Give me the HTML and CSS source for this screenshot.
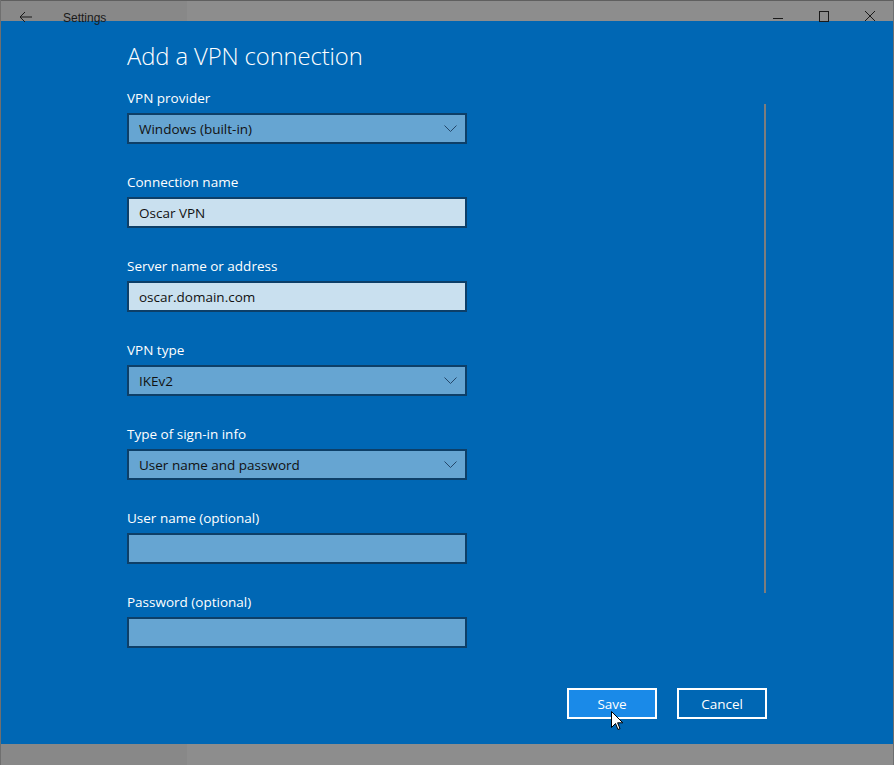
FILE: index.html
```html
<!DOCTYPE html>
<html>
<head>
<meta charset="utf-8">
<link rel="stylesheet" href="styles.css">
</head>
<body>
<div class="window">
  <div class="titlebar">
    <div class="tb-left">
      <svg class="back" width="14" height="12" viewBox="0 0 14 12"><path d="M6 1 L1 6 L6 11 M1 6 H13" fill="none" stroke="#1a1a1a" stroke-width="1"/></svg>
      <span class="tb-title">Settings</span>
    </div>
    <div class="tb-controls">
      <svg width="12" height="12" viewBox="0 0 12 12"><path d="M1 8.5 H11" stroke="#1a1a1a" stroke-width="1"/></svg>
      <svg width="12" height="12" viewBox="0 0 12 12"><rect x="1.5" y="1.5" width="9" height="10" fill="none" stroke="#1a1a1a" stroke-width="1"/></svg>
      <svg width="12" height="12" viewBox="0 0 12 12"><path d="M1 1 L11 11 M11 1 L1 11" stroke="#1a1a1a" stroke-width="1"/></svg>
    </div>
  </div>
  <div class="content">
    <div class="main">
      <div class="form">
        <h1 class="title">Add a VPN connection</h1>
        <div class="group">
          <div class="label">VPN provider</div>
          <div class="field select"><span>Windows (built-in)</span><svg class="chev" width="13" height="8" viewBox="0 0 13 8"><path d="M0.5 0.5 L6.5 6.5 L12.5 0.5" fill="none" stroke="#24476a" stroke-width="1"/></svg></div>
        </div>
        <div class="group">
          <div class="label">Connection name</div>
          <div class="field filled"><span>Oscar VPN</span></div>
        </div>
        <div class="group">
          <div class="label">Server name or address</div>
          <div class="field filled"><span>oscar.domain.com</span></div>
        </div>
        <div class="group">
          <div class="label">VPN type</div>
          <div class="field select"><span>IKEv2</span><svg class="chev" width="13" height="8" viewBox="0 0 13 8"><path d="M0.5 0.5 L6.5 6.5 L12.5 0.5" fill="none" stroke="#24476a" stroke-width="1"/></svg></div>
        </div>
        <div class="group">
          <div class="label">Type of sign-in info</div>
          <div class="field select"><span>User name and password</span><svg class="chev" width="13" height="8" viewBox="0 0 13 8"><path d="M0.5 0.5 L6.5 6.5 L12.5 0.5" fill="none" stroke="#24476a" stroke-width="1"/></svg></div>
        </div>
        <div class="group">
          <div class="label">User name (optional)</div>
          <div class="field empty"></div>
        </div>
        <div class="group last">
          <div class="label">Password (optional)</div>
          <div class="field empty"></div>
        </div>
      </div>
      <div class="scrollbar"></div>
    </div>
    <div class="actions">
      <div class="btn primary">Save</div>
      <div class="btn">Cancel</div>
    </div>
    <svg class="cursor" width="13" height="21" viewBox="0 0 13 21"><path d="M0.5 0.5 L0.5 16.5 L4.5 12.5 L7 18.5 L9 17.6 L6.6 11.8 L11.8 11.8 Z" fill="#fff" stroke="#000" stroke-width="1" stroke-linejoin="miter"/></svg>
  </div>
  <div class="bottombar"><div class="bb-left"></div></div>
</div>
</body>
</html>
```
FILE: styles.css
```css
html, body {
  margin: 0;
  padding: 0;
}
body {
  width: 894px;
  height: 765px;
  overflow: hidden;
  background: #8c8c8c;
  font-family: "Open Sans", "Noto Sans", sans-serif;
}
.window {
  width: 894px;
  height: 765px;
  box-sizing: border-box;
  border-left: 1px solid #6f6f6f;
  border-right: 1px solid #6f6f6f;
  display: flex;
  flex-direction: column;
}
.titlebar {
  height: 21px;
  box-sizing: border-box;
  border-top: 1px solid #5f5f5f;
  background: linear-gradient(to right, #888888 0, #888888 186px, #8d8d8d 186px);
  display: flex;
  justify-content: space-between;
  position: relative;
  z-index: 2;
}
.tb-left {
  display: flex;
  align-items: flex-start;
}
.back {
  margin: 10px 0 0 18px;
}
.tb-title {
  margin: 7px 0 0 30px;
  font-family: "Liberation Sans", sans-serif;
  font-size: 12px;
  line-height: 20px;
  color: #1a1a1a;
  height: 21px;
}
.tb-controls {
  display: flex;
  gap: 34px;
  margin: 9px 17px 0 0;
}
.content {
  flex: 1;
  background: #0067b4;
  padding: 19px 0 0 126px;
  position: relative;
}
.main {
  display: flex;
  align-items: flex-start;
}
.form {
  width: 340px;
}
.title {
  margin: 0 0 16px 0;
  font-family: "Open Sans", sans-serif;
  font-weight: 300;
  font-size: 23.8px;
  line-height: 32px;
  color: #ffffff;
  letter-spacing: -0.1px;
}
.group {
  margin-bottom: 28px;
}
.group.last {
  margin-bottom: 0;
}
.label {
  font-size: 13.5px;
  line-height: 20px;
  color: #ffffff;
  margin-bottom: 5px;
}
.field {
  height: 31px;
  box-sizing: border-box;
  border: 2px solid #0d3f68;
  display: flex;
  align-items: center;
  justify-content: space-between;
  padding: 0 8px 0 10px;
  font-size: 13.5px;
  color: #111111;
}
.select, .empty {
  background: #66a5d2;
}
.filled {
  background: #c9e0ef;
}
.chev {
  margin-top: 1px;
}
.scrollbar {
  width: 2px;
  height: 489px;
  margin: 64px 0 0 297px;
  background: #7d7d7d;
}
.actions {
  display: flex;
  gap: 20px;
  margin: 40px 0 0 440px;
}
.btn {
  width: 90px;
  height: 31px;
  box-sizing: border-box;
  border: 2px solid #ffffff;
  color: #ffffff;
  font-size: 13.5px;
  display: flex;
  align-items: center;
  justify-content: center;
}
.btn.primary {
  background: #1a8ae8;
}
.cursor {
  position: absolute;
  left: 610px;
  top: 690px;
}
.bottombar {
  height: 21px;
  background: #8d8d8d;
}
.bb-left {
  width: 186px;
  height: 100%;
  background: #888888;
}
```
